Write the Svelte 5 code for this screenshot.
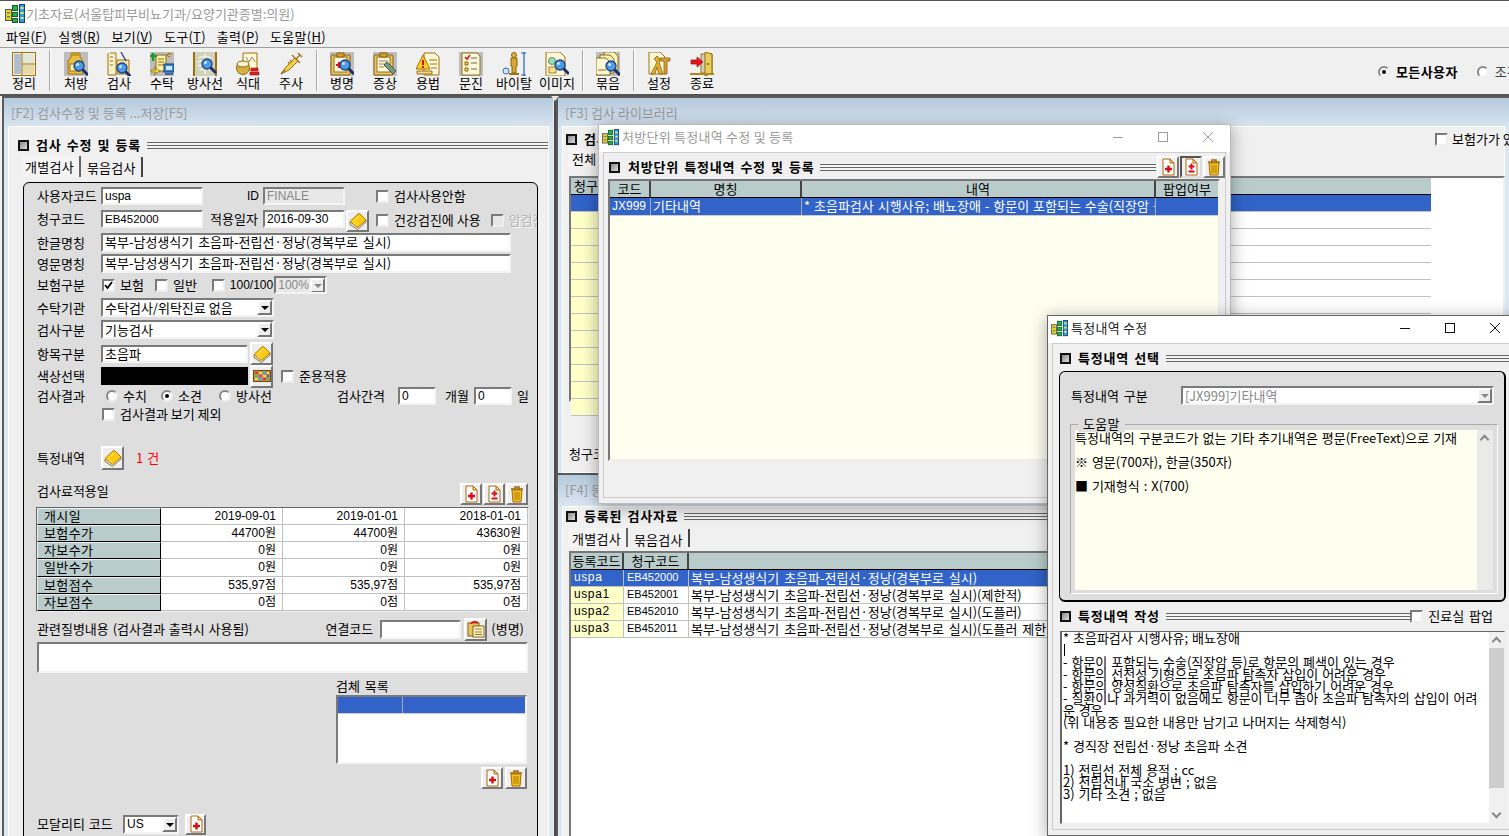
<script>
  const tools = [
    [['sheet','정리']],
    [['rx','처방'],['lab','검사'],['out','수탁'],['xray','방사선'],['meal','식대'],['inj','주사']],
    [['dis','병명'],['sym','증상'],['use','용법'],['ask','문진'],['vital','바이탈'],['img','이미지']],
    [['bundle','묶음']],
    [['conf','설정'],['exit','종료']]
  ];
  const menus = [['파일(','F',')'],['실행(','R',')'],['보기(','V',')'],['도구(','T',')'],['출력(','P',')'],['도움말(','H',')']];
  const fees = [
    ['개시일','2019-09-01','2019-01-01','2018-01-01'],
    ['보험수가','44700원','44700원','43630원'],
    ['자보수가','0원','0원','0원'],
    ['일반수가','0원','0원','0원'],
    ['보험점수','535,97점','535,97점','535,97점'],
    ['자보점수','0점','0점','0점']
  ];
  const nm = '복부-남성생식기 초음파-전립선·정낭(경복부로 실시)';
  const regs = [
    ['uspa','EB452000',nm,true],
    ['uspa1','EB452001',nm+'(제한적)',false],
    ['uspa2','EB452010',nm+'(도플러)',false],
    ['uspa3','EB452011',nm+'(도플러  제한적)',false]
  ];
  const libRows = [1,2,3,4,5,6,7,8,9,10,11,12];
  const memo = [
    '* 초음파검사 시행사유;  배뇨장애','',
    '- 항문이 포함되는 수술(직장암 등)로 항문의 폐색이 있는 경우',
    '- 항문의 선천성 기형으로 초음파 탐촉자 삽입이 어려운 경우',
    '- 항문의 양성질환으로 초음파 탐촉자를 삽입하기 어려운 경우',
    '- 질환이나 과거력이 없음에도 항문이 너무 좁아 초음파 탐촉자의 삽입이 어려',
    '운 경우',
    '(위 내용중 필요한 내용만 남기고 나머지는 삭제형식)','',
    '* 경직장 전립선·정낭 초음파 소견','',
    '1) 전립선 전체 용적 ; cc',
    '2) 전립선내 국소 병변 ; 없음',
    '3) 기타 소견 ; 없음'
  ];
</script>

{#snippet logo()}
  <svg class="logo" viewBox="0 0 20 20" width="20" height="20">
    <rect x="0.5" y="5.5" width="6" height="11" fill="#e8d820" stroke="#555"/>
    <rect x="2" y="8" width="3" height="1.5" fill="#777"/><rect x="2" y="12" width="3" height="1.5" fill="#777"/>
    <rect x="7.5" y="1.5" width="5" height="5" fill="#22b14c" stroke="#1a5c22"/>
    <rect x="7.5" y="8.5" width="5" height="4" fill="#22b14c" stroke="#1a5c22"/>
    <rect x="7.5" y="14.5" width="5" height="4" fill="#22b14c" stroke="#1a5c22"/>
    <rect x="14.5" y="0.5" width="5" height="18" fill="#2d9be8" stroke="#123f7a"/>
    <rect x="15.5" y="3" width="3" height="2" fill="#e8f040"/><rect x="15.5" y="8" width="3" height="2" fill="#e8f040"/><rect x="15.5" y="13" width="3" height="2" fill="#e8f040"/>
  </svg>
{/snippet}

{#snippet glass(x, y)}
  <g transform="translate({x} {y})">
    <path d="M3.5 3.5 9 9" stroke="#1c2f6a" stroke-width="3"/>
    <circle cx="0" cy="0" r="5" fill="#4d9be0" stroke="#1d3f86" stroke-width="1.3"/>
    <circle cx="-1.5" cy="-1.5" r="1.6" fill="#bfe3ff"/>
  </g>
{/snippet}

{#snippet tool(n)}
  <svg class="tico" viewBox="0 0 24 24" width="24" height="24">
    {#if n === 'sheet'}
      <rect x="0.5" y="0.5" width="23" height="23" fill="#f4f0dc" stroke="#a07010"/>
      <rect x="2" y="2" width="7" height="20" fill="#aebfd3"/><rect x="11" y="2" width="11" height="9" fill="#dfe8d8"/><rect x="11" y="13" width="11" height="9" fill="#e6d9a8"/>
      <path d="M10 1v22M10 12h13" stroke="#a07010" fill="none"/>
    {:else if n === 'rx'}
      <rect width="24" height="24" fill="#bdbdbd"/>
      <path d="M7 1h9v4l3 4v13H4V9l3-4z" fill="#e8c040" stroke="#a07010"/><rect x="7" y="1" width="9" height="3" fill="#c89820"/>
      <rect x="6" y="12" width="9" height="7" fill="#fff4b0" stroke="#a07010"/>
      {@render glass(15, 14)}
    {:else if n === 'lab'}
      <path d="M3 1h6v22H1V1" fill="#f8f0c8" stroke="#a07010"/><path d="M3 5h3M3 9h3M3 13h3" stroke="#a07010"/>
      <path d="M10 8h12v14H10z" fill="#f4e4a8" stroke="#a07010"/><path d="M14 0 19 9" stroke="#204080" stroke-width="1.3"/>
      {@render glass(15, 16)}
    {:else if n === 'out'}
      <rect width="24" height="24" fill="#bdbdbd"/>
      <path d="M6 3h10v16H6z" fill="#fff3a8" stroke="#8a6a10"/><path d="M8 7h6M8 10h6M8 13h6" stroke="#8a6a10"/>
      <path d="M3 0v8M0 3h7" stroke="#189a30" stroke-width="2.4" transform="translate(0 1)"/>
      <path d="M18 2 22 2M20 5l-3-2 3-2" stroke="#a07010" stroke-width="1.2" fill="#ffe080"/>
      <rect x="14" y="12" width="10" height="8" fill="#3a8ad8" stroke="#16386e"/><rect x="16" y="14" width="6" height="4" fill="#cfe6ff"/><rect x="15" y="21" width="8" height="2" fill="#3a6aa8"/>
      <path d="M1 18h5l-2-3 6 4-6 4 2-3H1z" fill="#ffd83a" stroke="#8a6a10" stroke-width=".7"/>
    {:else if n === 'xray'}
      <rect width="24" height="24" fill="#cfd2bd"/>
      <path d="M1 0v24M23 0v24" stroke="#a07010" stroke-width="2"/>
      <path d="M12 2v20M6 6c3-2 9-2 12 0M5 10c4-2 10-2 14 0M5 14c4-2 10-2 14 0M7 18c3-2 7-2 10 0" stroke="#f8f4d8" stroke-width="1.6" fill="none"/>
      {@render glass(14, 12)}
    {:else if n === 'meal'}
      <path d="M7 1h14v17H7z" fill="#fff8d0" stroke="#a07010"/><path d="M10 5l3 5 3-5 3 5" stroke="#888" fill="none"/>
      <ellipse cx="7" cy="16" rx="6.5" ry="6.5" fill="#d8b040" stroke="#8a6a10"/><ellipse cx="7" cy="12" rx="6" ry="3" fill="#f8f0d0" stroke="#8a6a10"/>
      <path d="M14 20h9v3h-9zM15 16h7v3h-7z" fill="#e02020" stroke="#901010" stroke-width=".6"/>
    {:else if n === 'inj'}
      <path d="M2 22 7 15 16 6l3 3-9 9z" fill="#f0d050" stroke="#a07010"/>
      <path d="M2 22l4-4M13 3l8 8M19 1l4 4M21 3l-4 4M9 10l2 2M11 8l2 2" stroke="#a07010" stroke-width="1.3" fill="none"/>
    {:else if n === 'dis' || n === 'sym'}
      <rect width="24" height="24" fill="#bdbdbd"/>
      <rect x="1" y="3" width="19" height="20" rx="1" fill="#e8c468" stroke="#8a6010"/>
      <rect x="4" y="5" width="13" height="15" fill="#fff8e0" stroke="#a07010"/><rect x="7" y="1" width="7" height="4" fill="#d0a030" stroke="#8a6010"/>
      {#if n === 'dis'}
        <path d="M9 10v6M6 13h6" stroke="#e01020" stroke-width="2.2"/>
        {@render glass(15, 13)}
      {:else}
        <path d="M6 9h9M6 12h9M6 15h5" stroke="#a08040"/>
        <path d="M11 13 14 10 23 19 20 22z" fill="#7a9a88" stroke="#3a5a48"/>
      {/if}
    {:else if n === 'use'}
      <path d="M8 1h11l4 4v18H8z" fill="#fff8d8" stroke="#a07010"/><path d="M13 8h8M14 12h7M15 16h6" stroke="#a07010"/>
      <path d="M7 3 14 17H0z" fill="#ffd020" stroke="#a07010"/><path d="M7 8v5M7 14v2" stroke="#d81010" stroke-width="2"/>
      <path d="M1 19h15v3H1z" fill="#f0d890" stroke="#a07010"/>
    {:else if n === 'ask'}
      <rect width="24" height="24" fill="#bdbdbd"/>
      <path d="M3 1h15l3 3v19H3z" fill="#fff8d8" stroke="#8a7020"/>
      <path d="M6 5l2 2 3-4" stroke="#d81010" stroke-width="1.5" fill="none"/>
      <path d="M6 10h3v3H6zM6 16h3v3H6z" fill="#ffe060" stroke="#8a6010"/><path d="M12 6h6M12 11h6M12 17h6" stroke="#666"/>
    {:else if n === 'vital'}
      <path d="M22 0v24M19 1h5M19 23h5" stroke="#2860c0" stroke-width="1.2" fill="none"/>
      <path d="M9 6h6v8h-1v7h-4v-7H9z" fill="#d8a830" stroke="#8a6010"/><circle cx="12" cy="3" r="2.5" fill="#e0b840" stroke="#8a6010"/>
      <path d="M7 22h10" stroke="#a07010" stroke-width="2"/>
      <circle cx="4" cy="19" r="3" fill="#cfe6ff" stroke="#3868a8"/>
    {:else if n === 'img'}
      <path d="M1 0h14l5 5v19H1z" fill="#fff8d8" stroke="#a07010"/>
      <circle cx="7" cy="9" r="3.5" fill="#90e0b0" stroke="#609070"/><path d="M4 15h7v6H4z" fill="#f8e090" stroke="#a08030"/>
      {@render glass(15, 13)}
    {:else if n === 'bundle'}
      <rect width="24" height="24" fill="#bdbdbd"/>
      <path d="M8 0h10l4 4v14H8z" fill="#fff4c0" stroke="#8a6a10"/><path d="M4 3h10l4 4v14H4z" fill="#fff4c0" stroke="#8a6a10"/><path d="M0 6h10l4 4v13H0z" fill="#fff8d8" stroke="#8a6a10"/>
      <path d="M2 18h8" stroke="#8a6a10"/>
      {@render glass(15, 14)}
    {:else if n === 'conf'}
      <path d="M2 0h11l5 5v17H2z" fill="#fff8d8" stroke="#a07010"/>
      <path d="M4 22 10 10l-3-3 3-3 3 3-1 3 4 12H12L10 15 8 22z" fill="#e0b030" stroke="#8a6010" stroke-width=".8"/>
      <path d="M13 6h10v3h-3v13h-3V9h-4z" fill="#d8a030" stroke="#8a6010" stroke-width=".8"/>
    {:else if n === 'exit'}
      <path d="M11 2h11v19H11z" fill="#cfcfc8" stroke="#a07010"/><path d="M15 0l7 2v19l-7 3z" fill="#e8d058" stroke="#8a6a10"/><circle cx="18" cy="12" r="1" fill="#805010"/>
      <path d="M0 21h24v2H0z" fill="#b08820"/>
      <path d="M1 8h6V5l6 5-6 5v-3H1z" fill="#e81818" stroke="#901010" stroke-width=".7"/>
    {/if}
  </svg>
{/snippet}

{#snippet ico(n)}
  <svg viewBox="0 0 18 18" width="18" height="18">
    {#if n === 'book'}
      <path d="M1 10v2.500l7.500 5 8.500-7.500V8z" fill="#e4e2d4" stroke="#8a7a50"/>
      <path d="M1 9.500 9 2q1-.8 2 0l6 6-8.500 7.500z" fill="#ffcc10" stroke="#b07808"/>
      <path d="M5 9l5-4.500M4 10.500l4 3" stroke="#ffe880" fill="none"/>
    {:else if n === 'add' || n === 'pm'}
      <path d="M4 1h7l4 4v12H4z" fill="#fff" stroke="#a86a10"/><path d="M11 1v4h4z" fill="#ffe070" stroke="#a86a10"/>
      {#if n === 'add'}
        <path d="M9.500 7.500v7M6 11h7" stroke="#d80c18" stroke-width="2.400"/>
      {:else}
        <path d="M9.500 5.500v6M6.500 8.500h6M6.500 13.500h6" stroke="#d80c18" stroke-width="2"/>
      {/if}
    {:else if n === 'trash'}
      <path d="M3 4h12M7 4V2h4v2" stroke="#a06a08" stroke-width="1.600" fill="none"/>
      <path d="M4 5h10l-1 12H5z" fill="#f4c420" stroke="#a06a08"/>
      <path d="M7 7v8M9 7v8M11 7v8" stroke="#b07808"/>
    {:else if n === 'palette'}
      <rect x="0.500" y="3.500" width="17" height="11" fill="#c09050" stroke="#704a10"/>
      <path d="M2 5h3v2H2z" fill="#f03030"/><path d="M6 5h3v2H6z" fill="#f8e040"/><path d="M10 5h3v2h-3z" fill="#30b0f0"/><path d="M14 5h2v2h-2z" fill="#f8e040"/>
      <path d="M2 8h3v2H2z" fill="#30d060"/><path d="M6 8h3v2H6z" fill="#f030a0"/><path d="M10 8h3v2h-3z" fill="#f8e040"/><path d="M14 8h2v2h-2z" fill="#3060f0"/>
      <path d="M2 11h3v2H2z" fill="#f8e040"/><path d="M6 11h3v2H6z" fill="#30b0f0"/><path d="M10 11h3v2h-3z" fill="#f03030"/><path d="M14 11h2v2h-2z" fill="#30d060"/>
    {:else if n === 'clip'}
      <rect x="1" y="3" width="11" height="13" fill="#e8c468" stroke="#8a6010"/>
      <rect x="6" y="6" width="11" height="11" fill="#fff8d0" stroke="#8a6010"/>
      <path d="M8 9h7M8 12h7M8 14.500h7" stroke="#a07010"/>
      <path d="M4 4a4 3 0 0 1 7-1" stroke="#d81010" stroke-width="1.600" fill="none"/>
    {/if}
  </svg>
{/snippet}

{#snippet sect(t)}
  <span class="sq"></span><b class="stitle">{t}</b><span class="lines"></span>
{/snippet}

{#snippet cb(on, dis)}
  <span class="cb" class:dis>{#if on}<svg viewBox="0 0 9 9" width="9" height="9"><path d="M1 4l2.500 3L8 1" stroke="#000" stroke-width="1.800" fill="none"/></svg>{/if}</span>
{/snippet}

{#snippet radio(on)}
  <span class="rd" class:on></span>
{/snippet}

{#snippet wctl(c)}
  <div class="wctl {c}">
    <svg viewBox="0 0 12 12" width="12" height="12"><path d="M1 6.500h10" stroke="currentColor"/></svg>
    <svg viewBox="0 0 12 12" width="12" height="12"><rect x="1.500" y="1.500" width="9" height="9" fill="none" stroke="currentColor"/></svg>
    <svg viewBox="0 0 12 12" width="12" height="12"><path d="M1 1l10 10M11 1 1 11" stroke="currentColor"/></svg>
  </div>
{/snippet}

{#snippet combo(t, c)}
  <div class="combo {c}"><span>{t}</span><i class="arr"></i></div>
{/snippet}

<div class="app">
  <div class="title">
    {@render logo()}
    <span class="ttxt">기초자료(서울탑피부비뇨기과/요양기관종별:의원)</span>
  </div>
  <div class="menu">
    {#each menus as m}
      <span>{m[0]}<u>{m[1]}</u>{m[2]}</span>
    {/each}
  </div>
  <div class="toolbar">
    {#each tools as g, i}
      {#if i > 0}<span class="sep"></span>{/if}
      <div class="tgroup">
        {#each g as t}
          <div class="titem">{@render tool(t[0])}<span>{t[1]}</span></div>
        {/each}
      </div>
    {/each}
    <div class="scope">
      {@render radio(true)}<b>모든사용자</b>
      <span class="scope2">{@render radio(false)}<span>조건</span></span>
    </div>
  </div>

  <div class="work">
    <section class="panel pleft">
      <div class="phead">[F2] 검사수정 및 등록 ...저장[F5]</div>
      <div class="pbody">
        <div class="shead">{@render sect('검사 수정 및 등록')}</div>
        <div class="tabs"><span class="tab active">개별검사</span><span class="tab">묶음검사</span></div>
        <div class="group">
          <div class="row r1">
            <label>사용자코드</label><span class="fld w102 lat">uspa</span>
            <label class="l-id lat">ID</label><span class="fld w82 lat off">FINALE</span>
            <span class="chk c1">{@render cb(false)}<span>검사사용안함</span></span>
          </div>
          <div class="row r2">
            <label>청구코드</label><span class="fld w102 lat eb">EB452000</span>
            <label class="l-date">적용일자</label><span class="fld w82 lat">2016-09-30</span>
            <span class="btn bbook">{@render ico('book')}</span>
            <span class="chk c2">{@render cb(false)}<span>건강검진에 사용</span></span>
            <span class="chk c3">{@render cb(false, true)}<span class="distxt">암검진</span></span>
          </div>
          <div class="row r3"><label>한글명칭</label><span class="fld wlong kr">{nm}</span></div>
          <div class="row r3 mt2"><label>영문명칭</label><span class="fld wlong kr">{nm}</span></div>
          <div class="row r4">
            <label>보험구분</label>
            <span class="chk">{@render cb(true)}<span>보험</span></span>
            <span class="chk c-il">{@render cb(false)}<span>일반</span></span>
            <span class="chk c-100">{@render cb(false)}<span class="lat">100/100</span></span>
            {@render combo('100%', 'pct')}
          </div>
          <div class="row r5"><label>수탁기관</label>{@render combo('수탁검사/위탁진료 없음', 'w173')}</div>
          <div class="row r6"><label>검사구분</label>{@render combo('기능검사', 'w173')}</div>
          <div class="row r7">
            <label>항목구분</label><span class="fld w147 kr">초음파</span><span class="btn bsq">{@render ico('book')}</span>
          </div>
          <div class="row r8">
            <label>색상선택</label><span class="black"></span><span class="btn bsq">{@render ico('palette')}</span>
            <span class="chk c-ju">{@render cb(false)}<span>준용적용</span></span>
          </div>
          <div class="row r9">
            <label>검사결과</label>
            <span class="rad r-a">{@render radio(false)}<span>수치</span></span>
            <span class="rad r-b">{@render radio(true)}<span>소견</span></span>
            <span class="rad r-c">{@render radio(false)}<span>방사선</span></span>
            <label class="l-gap">검사간격</label><span class="fld w38 lat">0</span>
            <span class="u1">개월</span><span class="fld w38 lat">0</span><span class="u2">일</span>
          </div>
          <div class="row r10"><label></label><span class="chk">{@render cb(false)}<span>검사결과 보기 제외</span></span></div>
          <div class="row r11">
            <label>특정내역</label><span class="btn bspec">{@render ico('book')}</span><span class="red">1 건</span>
          </div>
          <div class="row r12">
            <label class="grow up3">검사료적용일</label>
            <span class="btn bsm">{@render ico('add')}</span><span class="btn bsm">{@render ico('pm')}</span><span class="btn bsm">{@render ico('trash')}</span>
          </div>
          <div class="fees">
            {#each fees as f}
              <div class="fh">{f[0]}</div><div class="fd">{f[1]}</div><div class="fd">{f[2]}</div><div class="fd">{f[3]}</div>
            {/each}
          </div>
          <div class="row r14">
            <label class="grow rel">관련질병내용 (검사결과 출력시 사용됨)</label>
            <span class="l-link">연결코드</span><span class="fld w82"></span>
            <span class="btn bclip">{@render ico('clip')}</span><span class="bm">(병명)</span>
          </div>
          <div class="area"></div>
          <div class="specimen">
            <div class="sp-l">검체 목록</div>
            <div class="list"><div class="lhead"><span></span></div></div>
            <div class="lbtns"><span class="btn bsm">{@render ico('add')}</span><span class="btn bsm">{@render ico('trash')}</span></div>
          </div>
          <div class="row r19">
            <label class="l-mod">모달리티 코드</label>{@render combo('US', 'mod')}<span class="btn bmod">{@render ico('add')}</span>
          </div>
        </div>
      </div>
    </section>

    <div class="split"></div>

    <div class="rcol">
      <section class="panel f3">
        <div class="phead">[F3] 검사 라이브러리</div>
        <div class="pbody">
          <div class="shead">
            {@render sect('검사 라이브러리')}
            <span class="ins">{@render cb(false)}<span>보험가가 있는</span></span>
          </div>
          <div class="tabs t3"><span class="tab active">전체</span></div>
          <div class="lib">
            <div class="lib-h"><span class="h1">청구코드</span><span class="h2">한글명칭</span></div>
            <div class="lib-r sel"><span></span><span></span></div>
            {#each libRows as r}
              <div class="lib-r"><span></span><span></span></div>
            {/each}
          </div>
          <div class="lib-f">청구코드</div>
        </div>
      </section>
      <section class="panel f4">
        <div class="phead">[F4] 등록된 검사자료</div>
        <div class="pbody">
          <div class="shead">{@render sect('등록된 검사자료')}</div>
          <div class="tabs"><span class="tab active">개별검사</span><span class="tab">묶음검사</span></div>
          <div class="reg">
            <div class="reg-h"><span>등록코드</span><span>청구코드</span><span>한글명칭</span></div>
            {#each regs as r}
              <div class="reg-r" class:sel={r[3]}><span class="lat">{r[0]}</span><span class="lat">{r[1]}</span><span class="kr">{r[2]}</span></div>
            {/each}
          </div>
        </div>
      </section>
    </div>
  </div>

  <div class="win w1">
    <div class="wtitle">{@render logo()}<span>처방단위 특정내역 수정 및 등록</span>{@render wctl('dim')}</div>
    <div class="wbody">
      <div class="shead s1">
        {@render sect('처방단위 특정내역 수정 및 등록')}
        <span class="btn bsm">{@render ico('add')}</span><span class="btn bsm press">{@render ico('pm')}</span><span class="btn bsm">{@render ico('trash')}</span>
      </div>
      <div class="det">
        <div class="det-h"><span>코드</span><span>명칭</span><span>내역</span><span>팝업여부</span></div>
        <div class="det-r"><span class="lat">JX999</span><span>기타내역</span><span class="clip">* 초음파검사 시행사유;  배뇨장애 - 항문이 포함되는 수술(직장암 등)</span><span></span></div>
      </div>
    </div>
  </div>

  <div class="win w2">
    <div class="wtitle">{@render logo()}<span class="on">특정내역 수정</span>{@render wctl('')}</div>
    <div class="wbody">
      <div class="shead s2">{@render sect('특정내역 선택')}</div>
      <div class="g2">
        <div class="g2-row"><label>특정내역 구분</label>{@render combo('[JX999]기타내역', 'wide')}</div>
        <div class="fs">
          <span class="legend">도움말</span>
          <div class="help">
            <div class="htext">
              <p>특정내역의 구분코드가 없는 기타 추기내역은 평문(FreeText)으로 기재</p>
              <p>※ 영문(700자), 한글(350자)</p>
              <p>■ 기재형식 : X(700)</p>
            </div>
            <div class="hscroll"><i class="up"></i></div>
          </div>
        </div>
      </div>
      <div class="shead s3">
        {@render sect('특정내역 작성')}
        {@render cb(false)}<span class="pop">진료실 팝업</span>
      </div>
      <div class="memo">
        <div class="mtext">
          {#each memo as l, i}
            <div class="ml">{#if i === 1}<i class="caret"></i>{/if}{l}</div>
          {/each}
        </div>
        <div class="mscroll"><i class="up"></i><span class="thumb"></span><i class="dn"></i></div>
      </div>
    </div>
  </div>
</div>

<style>
  :global(body) { margin: 0; }
  .app {
    position: relative; width: 1509px; height: 836px; overflow: hidden; background: #f0f0f0;
    font: 13px/16px "Noto Sans CJK KR", "Liberation Sans", sans-serif; color: #000;
  }
  .lat { font-family: "Liberation Sans", "Noto Sans CJK KR", sans-serif; font-size: 12px; }
  .eb { font-size: 11.500px; }
  .kr { word-spacing: 2px; }
  p { margin: 0; }
  label { display: block; }
  svg { display: block; flex: none; }

  .title { height: 27px; box-sizing: border-box; border-top: 1px solid #555; background: #fff; display: flex; align-items: center; padding-left: 5px; gap: 1px; color: #999; }
  .menu { height: 20px; display: flex; gap: 11px; padding-left: 6px; align-items: center; }
  .menu span { letter-spacing: .02em; }
  .toolbar { height: 46px; border-top: 1px solid #a0a0a0; border-bottom: 2px solid #555; display: flex; padding-left: 2.500px; position: relative; }
  .tgroup { display: flex; }
  .titem { width: 43px; display: flex; flex-direction: column; align-items: center; padding-top: 4px; box-sizing: border-box; }
  .titem span { line-height: 14px; margin-top: 0; white-space: nowrap; }
  .sep { width: 1px; height: 41px; margin: 2px 3.500px 0 3.500px; background: #aaa; box-shadow: 1px 0 #fff; }
  .sep:nth-child(2) { margin-right: 4.500px; }
  .scope { margin-left: auto; width: 131px; height: 46px; display: flex; align-items: center; gap: 6px; overflow: hidden; padding-top: 1px; white-space: nowrap; flex: none; }
  .scope b { font-weight: 700; color: #000; font-size: 13px; letter-spacing: .03em; }
  .scope2 { display: flex; align-items: center; gap: 6px; margin-left: 13px; color: #444; flex: none; }

  .work { height: 740px; display: flex; }
  .panel { background: linear-gradient(#b6cadc 0, #dbe7f2 32px, #dbe7f2 100%); border: solid #5a5a5a; border-width: 2px 0 0 2px; box-sizing: border-box; }
  .pleft { margin-left: 2px; width: 551px; flex: none; }
  .phead { height: 28px; line-height: 30px; padding-left: 7px; color: #999; white-space: nowrap; }
  .pbody { margin: 0 4px 0 4px; background: #f0f0f0; border: 1px solid #fff; height: 100%; box-sizing: border-box; }
  .split { width: 2px; background: #4a4a4a; margin-left: 1px; flex: none; position: relative; }
  .split::before { content: ""; position: absolute; left: -3px; top: 0; border: 4px solid transparent; border-top: 5px solid #e8e8e8; border-bottom: 0; }
  .rcol { flex: 1; min-width: 0; display: flex; flex-direction: column; margin-left: 0; }

  .shead { display: flex; align-items: center; height: 16px; margin: 10px 0 0 3px; }
  .pleft .shead { margin-left: 9px; }
  .sq { width: 11px; height: 11px; flex: none; box-sizing: border-box; border: 2px solid #111; background: linear-gradient(135deg, #888, #ddd); margin-right: 7px; }
  .stitle { font-weight: 700; font-size: 13px; letter-spacing: .06em; word-spacing: 1.500px; white-space: nowrap; margin-right: 6px; }
  .lines { flex: 1; height: 7px; min-width: 0; background: repeating-linear-gradient(#666 0 1px, #f4f4f4 1px 3px); }

  .tabs { display: flex; height: 20px; padding-left: 12px; margin-top: 4px; }
  .tab { padding: 1px 5px 0 4px; margin-right: 2px; border-right: 2px solid #444; letter-spacing: .02em; white-space: nowrap; color: #000; line-height: 19px; }
  .tab.active { border-right: 2px solid #666; background: #f4f4f4; margin-top: -1px; }

  .group { margin: 5px 0 0 14px; width: 515px; box-sizing: border-box; height: 660px; border: 1px solid #000; border-radius: 6px 6px 0 0; background: #dedede; padding: 4px 8px 0 13px; position: relative; overflow: hidden; }
  .row { display: flex; align-items: center; white-space: nowrap; }
  .row > label:first-child { width: 64px; flex: none; }
  .fld { display: block; box-sizing: border-box; background: #fff; border: 2px solid; border-color: #7a7a7a #f4f4f4 #f4f4f4 #7a7a7a; padding-left: 2px; height: 18px; line-height: 14px; overflow: hidden; white-space: nowrap; flex: none; }
  .w102 { width: 102px; } .w82 { width: 82px; } .w147 { width: 147px; } .w38 { width: 38px; }
  .wlong { width: 410px; height: 19px; }
  .off { color: #888; background: #e8e8e8; }
  .btn { display: flex; align-items: center; justify-content: center; box-sizing: border-box; background: #eee; border: 2px solid; border-color: #fff #777 #777 #fff; flex: none; }
  .press { border-color: #555 #ddd #ddd #555; }
  .chk { display: flex; align-items: center; gap: 5px; margin-left: 1px; }
  .cb { width: 13px; height: 13px; box-sizing: border-box; display: flex; align-items: center; justify-content: center; flex: none; background: #fff; border: 2px solid; border-color: #7a7a7a #eee #eee #7a7a7a; }
  .cb.dis { background: #e6e6e6; }
  .distxt { color: #b4b4b4; text-shadow: 1px 1px #f8f8f8; }
  .rd { width: 12px; height: 12px; box-sizing: border-box; border-radius: 50%; background: #fff; border: 2px solid; border-color: #888 #eee #eee #888; flex: none; position: relative; }
  .rd.on::after { content: ""; position: absolute; left: 2px; top: 2px; width: 4px; height: 4px; background: #000; border-radius: 50%; }
  .rad { display: flex; align-items: center; gap: 5px; }

  .r1 { height: 18px; }
  .l-id { margin-left: 44px; width: 16px; }
  .c1 { margin-left: 31px; }
  .r2 { height: 22px; margin-top: 5px; align-items: flex-start; }
  .r2 label { line-height: 18px; }
  .l-date { width: 53px; margin-left: 7px; flex: none; }
  .bbook { width: 23px; height: 22px; margin-left: 1px; }
  .c2 { margin-left: 7px; margin-top: 2px; }
  .c3 { margin-left: 10px; margin-top: 2px; }
  .r3 { height: 19px; margin-top: 1px; }
  .mt2 { margin-top: 2px; }
  .r4 { height: 18px; margin-top: 3px; }
  .c-il { margin-left: 11px; }
  .c-100 { margin-left: 15px; }
  .combo { display: flex; align-items: center; justify-content: space-between; box-sizing: border-box; background: #fff; border: 2px solid; border-color: #7a7a7a #f4f4f4 #f4f4f4 #7a7a7a; height: 19px; padding-left: 2px; white-space: nowrap; flex: none; overflow: hidden; }
  .arr { width: 15px; height: 15px; box-sizing: border-box; background: #eee; border: 2px solid; border-color: #fff #777 #777 #fff; position: relative; flex: none; }
  .arr::after { content: ""; position: absolute; left: 2px; top: 4px; border: 4px solid transparent; border-top: 4px solid #000; border-bottom: 0; }
  .w173 { width: 173px; }
  .pct { width: 53px; height: 18px; margin-left: 1px; font: 12px/14px "Liberation Sans", sans-serif; color: #888; background: #e8e8e8; }
  .pct .arr::after, .wide .arr::after { border-top-color: #888; }
  .r5 { height: 19px; margin-top: 4px; }
  .r6 { height: 19px; margin-top: 3px; }
  .r7 { height: 23px; margin-top: 3px; }
  .bsq { width: 23px; height: 23px; margin-left: 2px; }
  .r8 { height: 22px; }
  .black { width: 147px; height: 18px; background: #000; flex: none; }
  .c-ju { margin-left: 8px; }
  .r9 { height: 18px; margin-top: 0; }
  .r-a { margin-left: 5px; width: 56px; }
  .r-b { width: 59px; }
  .r-c { width: 64px; }
  .l-gap { margin-left: 55px; width: 62px; }
  .u1 { margin: 0 9px; width: 20px; }
  .u2 { margin-left: 5px; }
  .r10 { height: 18px; }
  .r10 .chk { margin-left: 1px; }
  .r11 { height: 24px; margin-top: 23px; }
  .bspec { width: 23px; height: 24px; }
  .red { color: #f00; margin-left: 12px; letter-spacing: .04em; }
  .r12 { height: 22px; margin-top: 13px; gap: 1px; padding-right: 1px; }
  .row > label.grow { flex: 1; width: auto; }
  .up3 { margin-top: -6px; }
  .bsm { width: 22px; height: 22px; }
  .fees { display: grid; grid-template-columns: 124px 122px 122px 123px; grid-auto-rows: 17.170px; margin-top: 2px; box-sizing: border-box; width: 493px; height: 105px; border: solid; border-width: 1px; border-color: #666 #eee #eee #666; background: #fff; margin-left: -1px; }
  .fh { background: #b9cccb; border: 1px solid; border-color: #eee #000 #000 #eee; padding-left: 6px; line-height: 14px; letter-spacing: .03em; box-sizing: border-box; }
  .fd { background: #fff; border: solid #c0c0c0; border-width: 0 1px 1px 0; text-align: right; padding-right: 6px; font: 12px/16px "Liberation Sans", "Noto Sans CJK KR", sans-serif; box-sizing: border-box; }
  .r14 { height: 20px; margin-top: 7px; }
  .rel { word-spacing: 1px; }
  .l-link { margin-right: 7px; }
  .r14 .fld { width: 81px; height: 19px; }
  .bclip { width: 23px; height: 23px; margin-left: 3px; }
  .bm { margin-left: 4px; margin-right: 5px; }
  .area { width: 491px; height: 31px; margin-top: 3px; background: #fff; border: 2px solid; box-sizing: border-box; border-color: #7a7a7a #f4f4f4 #f4f4f4 #7a7a7a; }
  .specimen { margin: 4px 1px 0 299px; width: 191px; }
  .sp-l { word-spacing: 2px; line-height: 18px; }
  .list { height: 69px; box-sizing: border-box; background: #fff; border: 2px solid; border-color: #7a7a7a #f4f4f4 #f4f4f4 #7a7a7a; margin-top: 0; }
  .lhead { height: 16px; background: #3163c8; border-bottom: 1px solid #ccc; }
  .lhead span { display: block; width: 65px; height: 100%; border-right: 1px solid #aaa; box-sizing: border-box; }
  .lbtns { display: flex; justify-content: flex-end; gap: 2px; margin-top: 3px; }
  .r19 { height: 20px; margin-top: 25px; }
  .row > label.l-mod { width: 86px; word-spacing: 1px; }
  .mod { width: 56px; height: 19px; font: 12px/15px "Liberation Sans", sans-serif; }
  .bmod { width: 21px; height: 21px; margin-left: 6px; }

  .f3 { height: 377px; flex: none; }
  .f4 { flex: 1; min-height: 0; overflow: hidden; }
  .f3 .pbody { height: 347px; }
  .f3 .shead { margin-top: 4px; }
  .f3 .lines { max-width: 520px; }
  .ins { position: absolute; left: 1435px; top: 131px; display: flex; gap: 4px; align-items: center; white-space: nowrap; width: 74px; overflow: hidden; }
  .t3 { margin-top: 2px; height: 27px; padding-left: 5px; }
  .t3 .tab { height: 18px; }
  .lib { margin: 0 0 0 6px; width: 936px; height: 226px; box-sizing: border-box; background: #fff; border: 2px solid; border-color: #777 #eee #eee #777; }
  .lib-h { display: flex; height: 16px; background: #b9cccb; width: 860px; text-align: center; line-height: 15px; border-bottom: 1px solid #000; }
  .h1 { width: 54px; } .h2 { flex: 1; }
  .lib-r { display: flex; height: 17px; box-sizing: border-box; width: 860px; border-bottom: 1px solid #c0c0c8; }
  .lib-r span:first-child { width: 54px; background: #ffffc8; }
  .lib-r.sel { background: #3163c8; }
  .lib-r.sel span:first-child { background: #3163c8; }
  .lib-f { margin: 44px 0 0 6px; }

  .f4 .phead { height: 31px; }
  .f4 .shead { margin-top: 1px; }
  .f4 .tabs { margin-top: 5px; padding-left: 5px; height: 18px; }
  .reg { margin: 4px 0 0 6px; height: 400px; box-sizing: border-box; background: #fff; border: 2px solid; border-color: #777 #eee #eee #777; }
  .reg-h { display: flex; height: 17px; background: #b9cccb; text-align: center; line-height: 16px; border-bottom: 1px solid #000; box-sizing: border-box; }
  .reg-h span, .reg-r span { box-sizing: border-box; white-space: nowrap; overflow: hidden; flex: none; }
  .reg-h span:nth-child(1), .reg-r span:nth-child(1) { width: 53px; border-right: 2px solid #444; }
  .reg-h span:nth-child(2), .reg-r span:nth-child(2) { width: 65px; border-right: 2px solid #444; }
  .reg-h span:nth-child(3), .reg-r span:nth-child(3) { width: 800px; }
  .reg-r { display: flex; height: 17px; box-sizing: border-box; border-bottom: 1px solid #c0c0c0; line-height: 15px; }
  .reg-r span { padding-left: 3px; }
  .reg-r span:nth-child(1) { background: #ffffc8; border-right: 1px solid #c0c0c0; letter-spacing: .05em; }
  .reg-r span:nth-child(2) { border-right: 1px solid #c0c0c0; font-size: 11px; }
  .reg-r span.kr { padding-left: 2px; }
  .reg-r.sel, .reg-r.sel span { background: #3163c8; color: #fff; }

  .win { position: absolute; background: #f0f0f0; box-shadow: 0 3px 16px rgba(0,0,0,.35); box-sizing: border-box; }
  .w1 { left: 598px; top: 124px; width: 633px; height: 380px; border: 1px solid #bbb; }
  .w2 { left: 1047px; top: 315px; width: 470px; height: 521px; border: 1px solid #666; }
  .wtitle { height: 27px; background: #fff; display: flex; align-items: center; padding: 0 0 3px 3px; box-sizing: border-box; gap: 3px; color: #9a9a9a; position: relative; letter-spacing: .02em; }
  .wtitle span.on { color: #222; }
  .logo { width: 20px; height: 20px; }
  .wtitle .logo { width: 17px; height: 17px; }
  .wctl { position: absolute; display: flex; top: 6px; }
  .w1 .wctl { left: 513px; gap: 33px; color: #9a9a9a; }
  .w2 .wctl { left: 351px; gap: 33px; color: #111; }
  .wbody { margin: 0 4px; border: 1px solid #ccc; height: calc(100% - 32px); box-sizing: border-box; position: relative; }

  .s1 { margin: 3px 0 0 5px; height: 22px; gap: 1px; }
  .s1 .stitle { margin-right: 4px; }
  .s1 .btn { background: #f0f0f0; }
  .det { margin: 1px 5px 0 4px; height: 282px; box-sizing: border-box; background: #fffff0; border: 2px solid; border-color: #777 #eee #eee #777; }
  .det-h { display: flex; height: 17px; background: #b9cccb; text-align: center; line-height: 16px; border-bottom: 1px solid #000; box-sizing: border-box; width: 608px; }
  .det-h span, .det-r span { box-sizing: border-box; flex: none; white-space: nowrap; overflow: hidden; }
  .det-h span:nth-child(1), .det-r span:nth-child(1) { width: 41px; border-right: 2px solid #444; }
  .det-h span:nth-child(2), .det-r span:nth-child(2) { width: 151px; border-right: 2px solid #444; }
  .det-h span:nth-child(3), .det-r span:nth-child(3) { width: 354px; border-right: 2px solid #444; }
  .det-h span:nth-child(4), .det-r span:nth-child(4) { width: 62px; }
  .det-r { display: flex; height: 18px; background: #3163c8; color: #fff; line-height: 16px; width: 608px; border-bottom: 1px solid #ccc; box-sizing: border-box; }
  .det-r span { border-right-color: #aab !important; border-right-width: 1px !important; padding-left: 2px; }
  .clip { word-spacing: 1px; }

  .s2 { margin: 6px 0 0 7px; height: 16px; }
  .g2 { margin: 5px 0 0 6px; width: 447px; height: 231px; box-sizing: border-box; border: 1px solid #000; border-radius: 6px; border-width: 1px 2px 2px 1px; background: #dedede; padding: 14px 11px 0 11px; }
  .g2-row { display: flex; align-items: center; height: 19px; }
  .g2-row label { width: 110px; word-spacing: 2px; flex: none; }
  .wide { width: 313px; height: 19px; color: #888; font: 13px/15px "Noto Sans CJK KR", sans-serif; }
  .fs { margin: 19px 0 0 -1px; width: 428px; height: 170px; box-sizing: border-box; border: 1px solid; border-color: #aaa #fff #fff #aaa; position: relative; padding: 5px 4px 0 4px; }
  .legend { position: absolute; left: 7px; top: -9px; background: #dedede; padding: 0 5px; letter-spacing: .02em; }
  .help { display: flex; height: 160px; }
  .htext { width: 403px; background: #fffff0; padding-top: 0; box-sizing: border-box; white-space: nowrap; }
  .htext p { height: 24px; line-height: 15px; word-spacing: 1px; }
  .hscroll { width: 16px; background: #eaeaea; position: relative; }
  .up, .dn { display: block; height: 16px; position: relative; }
  .up::after, .dn::after { content: ""; position: absolute; left: 4px; top: 6px; width: 5px; height: 5px; border: solid #888; border-width: 2px 0 0 2px; transform: rotate(45deg); }
  .dn::after { border-width: 0 2px 2px 0; top: 3px; }
  .s3 { margin: 6px 0 0 7px; height: 16px; padding-right: 18px; }
  .s3 .stitle { margin-right: 6px; }
  .pop { margin-left: 5px; word-spacing: 2px; white-space: nowrap; }
  .memo { margin: 7px 0 0 7px; width: 445px; height: 193px; box-sizing: border-box; background: #fff; border: 1px solid; border-color: #666 #eee #eee #666; border-left-width: 2px; display: flex; }
  .mtext { flex: 1; padding-top: 0; min-width: 0; }
  .ml { height: 12px; line-height: 12px; white-space: nowrap; word-spacing: 1px; padding-left: 1px; position: relative; }
  .caret { position: absolute; left: 2px; top: 0; width: 1px; height: 12px; background: #000; }
  .mscroll { width: 15px; background: #f0f0f0; display: flex; flex-direction: column; }
  .thumb { height: 140px; background: #cdcdcd; display: block; }
  .mscroll .dn { margin-top: auto; }
</style>
